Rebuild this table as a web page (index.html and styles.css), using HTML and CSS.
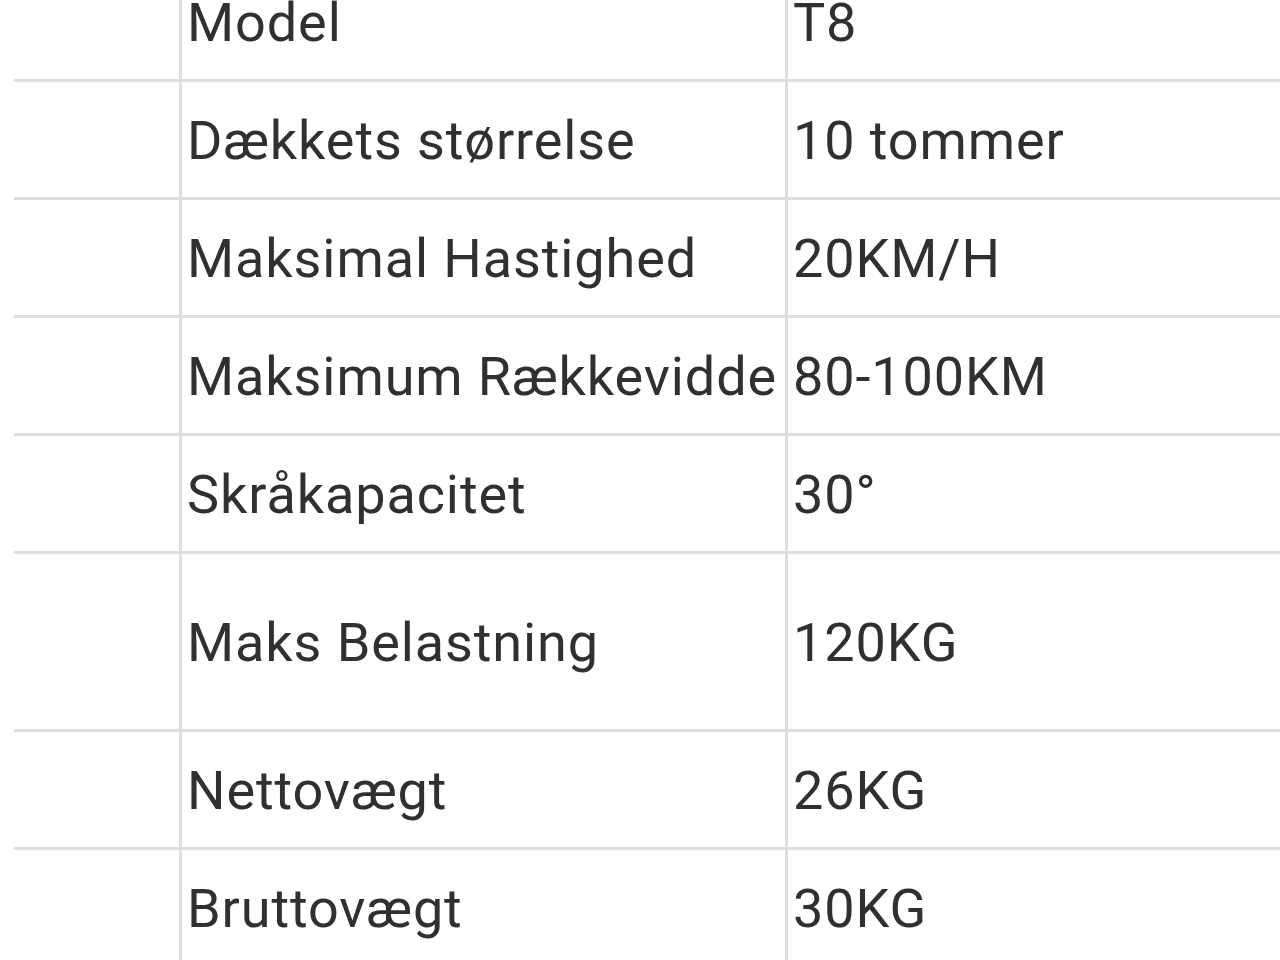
FILE: index.html
```html
<!DOCTYPE html>
<html lang="da">
<head>
<meta charset="utf-8">
<title>Specifikationer</title>
<link rel="stylesheet" href="styles.css">
</head>
<body>
<div class="specs">
  <div class="row"><div class="cell blank"></div><div class="cell">Model</div><div class="cell">T8</div></div>
  <div class="row"><div class="cell blank"></div><div class="cell">Dækkets størrelse</div><div class="cell">10 tommer</div></div>
  <div class="row"><div class="cell blank"></div><div class="cell">Maksimal Hastighed</div><div class="cell">20KM/H</div></div>
  <div class="row"><div class="cell blank"></div><div class="cell">Maksimum Rækkevidde</div><div class="cell">80-100KM</div></div>
  <div class="row"><div class="cell blank"></div><div class="cell">Skråkapacitet</div><div class="cell">30°</div></div>
  <div class="row tall"><div class="cell blank"></div><div class="cell">Maks Belastning</div><div class="cell">120KG</div></div>
  <div class="row"><div class="cell blank"></div><div class="cell">Nettovægt</div><div class="cell">26KG</div></div>
  <div class="row"><div class="cell blank"></div><div class="cell">Bruttovægt</div><div class="cell">30KG</div></div>
</div>
</body>
</html>
```
FILE: styles.css
```css
html, body {
  margin: 0;
  padding: 0;
  background: #ffffff;
  overflow: hidden;
}
body {
  font-family: Roboto, "Noto Sans", sans-serif;
  color: #303030;
}
.specs {
  margin-top: -36px;
  margin-left: 14px;
  width: 1300px;
}
.row {
  display: grid;
  grid-template-columns: 165px 606px 1fr;
  height: 118px;
}
.row.tall {
  height: 178px;
}
.cell {
  box-sizing: border-box;
  border-bottom: 3px solid #dedede;
  display: flex;
  align-items: center;
  padding: 4px 0 0 5px;
  font-size: 54px;
  letter-spacing: 0.9px;
  line-height: 1.2;
  white-space: nowrap;
}
.cell + .cell {
  border-left: 3px solid #dedede;
}
.cell.blank {
  padding: 0;
}
```
